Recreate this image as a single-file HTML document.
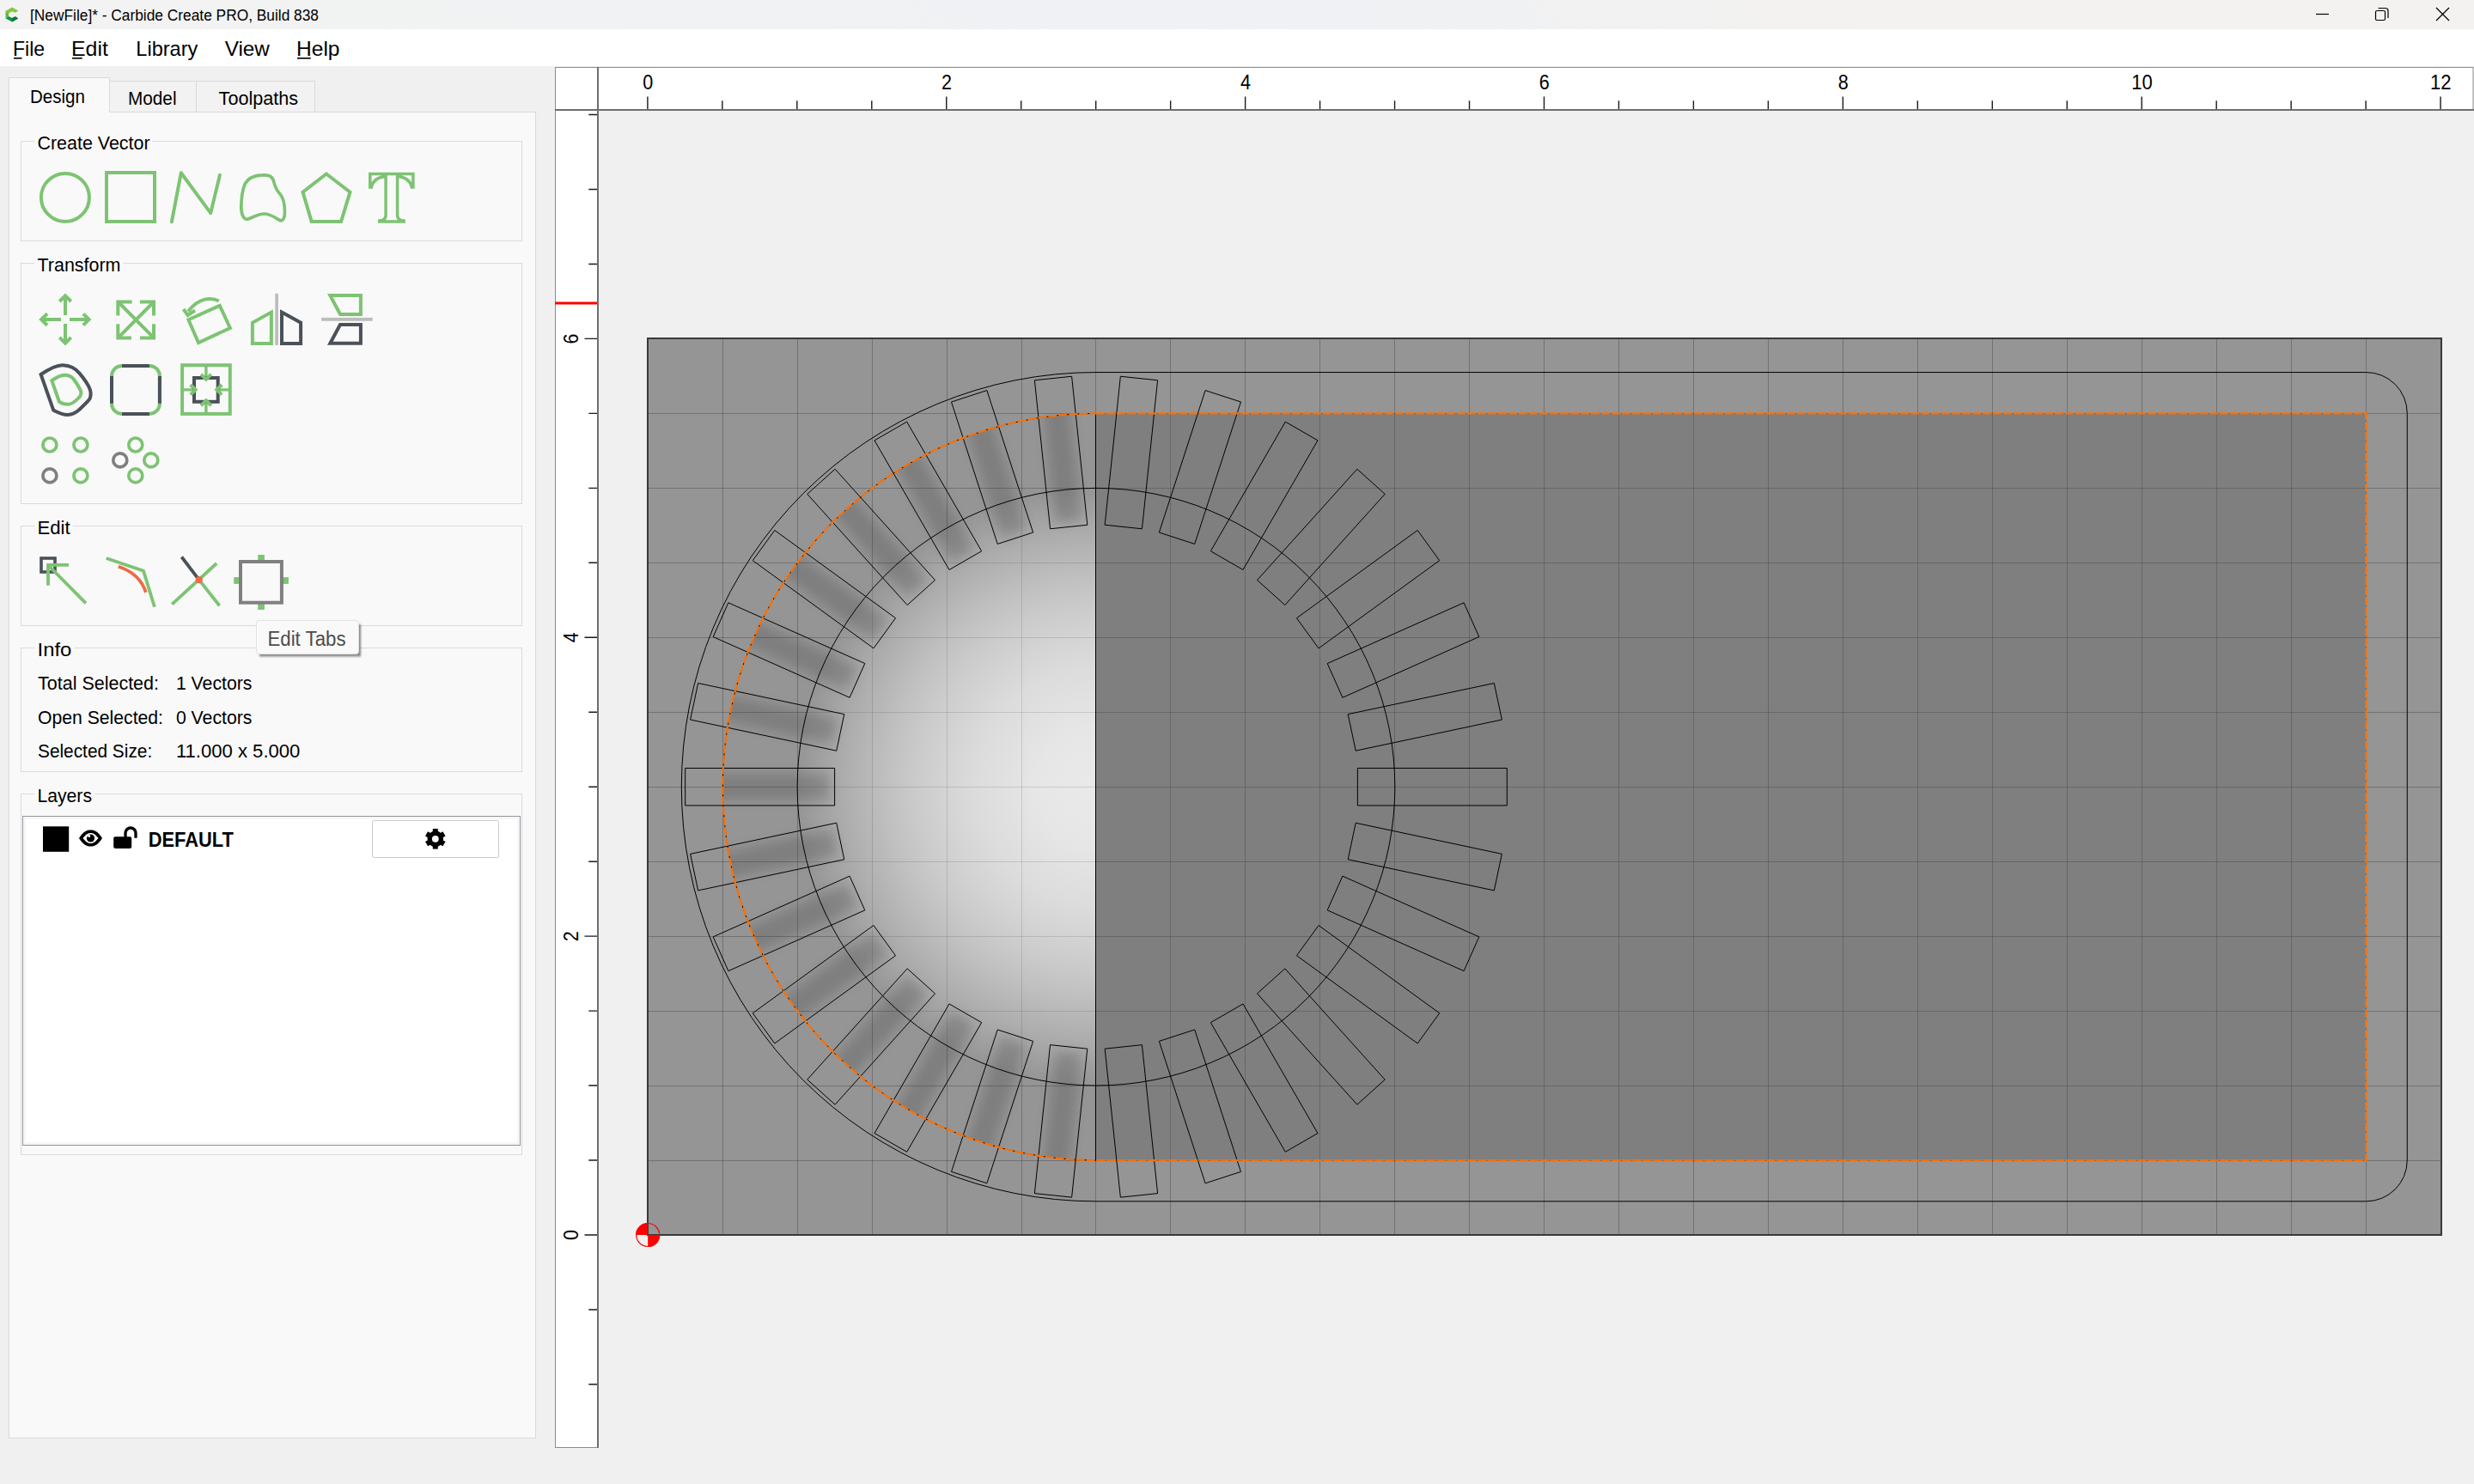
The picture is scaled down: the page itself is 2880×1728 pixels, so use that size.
<!DOCTYPE html><html><head><meta charset="utf-8"><style>html,body{margin:0;padding:0;overflow:hidden;background:#f0f0f0}svg{display:block}text{font-family:"Liberation Sans", sans-serif}</style></head><body><svg width="2880" height="1728" viewBox="0 0 2880 1728"><rect x="0" y="0" width="2880" height="1728" fill="#f0f0f0"/><defs><linearGradient id="tbg" x1="0" y1="0" x2="1" y2="0"><stop offset="0" stop-color="#f3f3f3"/><stop offset="0.25" stop-color="#f1f2f3"/><stop offset="0.5" stop-color="#eff1f5"/><stop offset="0.75" stop-color="#f3f2f0"/><stop offset="1" stop-color="#f3f2f1"/></linearGradient></defs><rect x="0" y="0" width="2880" height="34" fill="url(#tbg)"/><rect x="0" y="34" width="2880" height="43" fill="#ffffff"/><g><polygon points="14.1,8.5 21.2,12.4 17.9,14.7 14.1,13.3 10.1,15.6 6.5,12.8" fill="#86c440"/><polygon points="6.5,12.8 10.1,15.6 10.1,19 6.5,21.3" fill="#5fb748"/><polygon points="6.5,21.3 10.1,19 14.1,21.1 17.9,19.2 21.2,21.4 14.1,25.4" fill="#0d9440"/><polygon points="14.1,21.1 17.9,19.2 21.2,21.4 14.1,25.4" fill="#0a7a35"/></g><text x="35" y="24" font-size="17.5" fill="#000" textLength="336" lengthAdjust="spacingAndGlyphs" >[NewFile]* - Carbide Create PRO, Build 838</text><g stroke="#000" stroke-width="1.2" fill="none"><line x1="2696" y1="16.5" x2="2711" y2="16.5"/><rect x="2765.5" y="12.5" width="11" height="11" rx="1.5"/><path d="M2768.5,9.5 h8.5 a3,3 0 0 1 3,3 v8.5"/><line x1="2836" y1="9" x2="2851" y2="24"/><line x1="2851" y1="9" x2="2836" y2="24"/></g><text x="15" y="65.2" font-size="24" fill="#000" textLength="37.2" lengthAdjust="spacingAndGlyphs" >File</text><text x="83" y="65.2" font-size="24" fill="#000" textLength="42.8" lengthAdjust="spacingAndGlyphs" >Edit</text><text x="158.3" y="65.2" font-size="24" fill="#000" textLength="72" lengthAdjust="spacingAndGlyphs" >Library</text><text x="261.7" y="65.2" font-size="24" fill="#000" textLength="52.2" lengthAdjust="spacingAndGlyphs" >View</text><text x="345" y="65.2" font-size="24" fill="#000" textLength="50.5" lengthAdjust="spacingAndGlyphs" >Help</text><rect x="16" y="67" width="9.5" height="1.6" fill="#000"/><rect x="84" y="67" width="11.7" height="1.6" fill="#000"/><rect x="346" y="67" width="15.7" height="1.6" fill="#000"/><rect x="10.5" y="130.5" width="613" height="1544" fill="#f9f9f9" stroke="#dadada"/><rect x="127.5" y="94.5" width="101" height="36" fill="#f2f2f2" stroke="#dadada"/><rect x="228.5" y="94.5" width="138" height="36" fill="#f2f2f2" stroke="#dadada"/><path d="M10.5,131 V90.5 H127.5 V131" fill="#f9f9f9" stroke="#dadada"/><rect x="11" y="91" width="116" height="41" fill="#f9f9f9"/><text x="35" y="120" font-size="21.5" fill="#000" textLength="64" lengthAdjust="spacingAndGlyphs" >Design</text><text x="149" y="122" font-size="21.5" fill="#000" textLength="56.5" lengthAdjust="spacingAndGlyphs" >Model</text><text x="254.6" y="122" font-size="21.5" fill="#000" textLength="92.5" lengthAdjust="spacingAndGlyphs" >Toolpaths</text><rect x="24.5" y="164.5" width="583" height="116.0" fill="none" stroke="#dadada"/><rect x="40" y="162.5" width="137.6" height="4" fill="#f9f9f9"/><text x="43.5" y="173.5" font-size="22" fill="#000" textLength="131.1" lengthAdjust="spacingAndGlyphs" >Create Vector</text><rect x="24.5" y="306.5" width="583" height="280.0" fill="none" stroke="#dadada"/><rect x="40" y="304.5" width="103.5" height="4" fill="#f9f9f9"/><text x="43.5" y="316" font-size="22" fill="#000" textLength="97.0" lengthAdjust="spacingAndGlyphs" >Transform</text><rect x="24.5" y="612.5" width="583" height="116.0" fill="none" stroke="#dadada"/><rect x="40" y="610.5" width="44.7" height="4" fill="#f9f9f9"/><text x="43.5" y="622.3" font-size="22" fill="#000" textLength="38.2" lengthAdjust="spacingAndGlyphs" >Edit</text><rect x="24.5" y="754.5" width="583" height="144.0" fill="none" stroke="#dadada"/><rect x="40" y="752.5" width="46.3" height="4" fill="#f9f9f9"/><text x="43.5" y="763.8" font-size="22" fill="#000" textLength="39.8" lengthAdjust="spacingAndGlyphs" >Info</text><rect x="24.5" y="924.5" width="583" height="420.0" fill="none" stroke="#dadada"/><rect x="40" y="922.5" width="70" height="4" fill="#f9f9f9"/><text x="43.5" y="933.8" font-size="22" fill="#000" textLength="63.5" lengthAdjust="spacingAndGlyphs" >Layers</text><g fill="none" stroke="#7dc373" stroke-width="4"><circle cx="75.9" cy="229.9" r="28"/><rect x="124" y="201" width="56" height="57" stroke-linejoin="miter"/><polyline points="199.9,258.3 210.8,201.2 245.2,248.1 255.9,203.9" stroke-linecap="round" stroke-linejoin="round"/><path d="M306,203.9 C312,203.7 316,204.5 318.3,210 C320,216 320.5,220 325.5,225.2 C330,230 331.5,238 331.5,247 C331.5,253 330,257 326.4,256.8 C322,255 316,249 307.5,249 C300,249 293,254 288.5,255.2 C283,256 280.7,249 280.8,240 C281,230 282,222 285,214.5 C289,207 296,204 306,203.9 Z" stroke-width="3.7"/><polygon points="379.9,202.5 407.5,223.7 397.1,257.9 362.7,257.9 352.5,223.7" stroke-linejoin="miter"/><path d="M430.8,202.55 H480.9 V217.9 H479.3 Q477,206.7 462.6,205.3 V250.4 Q462.6,256.5 470.2,257.1 V257.9 H441.7 V257.1 Q449.1,256.5 449.1,250.4 V205.3 Q434.7,206.7 432.4,217.9 H430.8 Z" stroke-width="3.5"/></g><g fill="none" stroke="#7dc373" stroke-width="4"><path d="M76,346 V367 M76,377 V397.5 M50.5,372 H71 M81,372 H101.5"/><polyline points="69.3,351 76,344.3 82.7,351"/><polyline points="69.3,392.9 76,399.6 82.7,392.9"/><polyline points="55,365.3 48.1,372 55,378.7"/><polyline points="96.9,365.3 103.6,372 96.9,378.7"/><polyline points="153.6,351.4 137.3,351.4 137.3,367.5"/><polyline points="162.9,351.4 179,351.4 179,367.5"/><polyline points="137.3,377.3 137.3,393.4 153,393.4"/><polyline points="179,377.3 179,393.4 162.9,393.4"/><path d="M138.5,352.5 L178,392.3 M178,352.5 L138.5,392.3"/><polygon points="219.4,372.3 255.8,355.9 267.9,382 231,399"/><path d="M254.8,350.5 C246,346 232,346 219,362.5"/><polyline points="213.6,360 218.5,367 227,361.5"/><polygon points="293.9,375.7 315.9,363.6 315.9,400 293.9,400"/><polygon points="384.3,343.9 419.9,343.9 419.9,365.9 396,365.9"/></g><rect x="320.3" y="341.8" width="3.7" height="60.1" fill="#bdbdbd"/><rect x="374.1" y="369.9" width="59.7" height="3.9" fill="#bdbdbd"/><g fill="none" stroke="#4a5159" stroke-width="4"><polygon points="328,363.6 350.1,375.7 350.1,400 328,400"/><polygon points="396,378 419.9,378 419.9,399.8 384.3,399.8"/></g><path d="M47.6,436 C58,429 66,425 73,425.2 C82,425.5 88,429 92.3,434.4 C97,440 103,448 104.9,453.8 C106,458 106,461 104.4,464.5 C101,469 96,473 92.3,477.1 C88,481 84,483 78.7,482.9 C72,483 67,480 62.2,477.6 Z" fill="none" stroke="#4a5159" stroke-width="4"/><path d="M60.3,443.1 C65,440 70,437 74.8,436.8 C79,436.6 83,438.5 85.5,441.2 C89,446 92,450 94.2,455.7 C95,459 94,461 91.3,463.5 C88,467 84,470.5 79.7,470.8 C75,471 72,470 69,467.9 Z" fill="none" stroke="#7dc373" stroke-width="4"/><rect x="130" y="425.9" width="55.9" height="56" rx="12" fill="none" stroke="#7dc373" stroke-width="4"/><path d="M142,425.9 H173.8 M142,481.9 H173.8 M130,438 V469.8 M185.9,438 V469.8" stroke="#4a5159" stroke-width="4"/><rect x="212.1" y="425.2" width="55.7" height="56.7" fill="none" stroke="#7dc373" stroke-width="4"/><path d="M239.9,425 V482 M212,453.9 H268" stroke="#7dc373" stroke-width="3.4"/><rect x="226" y="440" width="27.7" height="27.8" fill="#f9f9f9" stroke="#4a5159" stroke-width="4"/><g fill="none" stroke="#7dc373" stroke-width="4"><polyline points="234,435.9 239.9,441.7 245.8,435.9"/><polyline points="234,472.2 239.9,466.4 245.8,472.2"/><polyline points="221.8,448 227.6,453.8 221.8,459.6"/><polyline points="258.1,448 252.3,453.8 258.1,459.6"/></g><g fill="none" stroke="#7dc373" stroke-width="3.7"><circle cx="57.9" cy="518" r="8"/><circle cx="93.9" cy="518" r="8"/><circle cx="93.9" cy="553.9" r="8"/><circle cx="157.8" cy="518" r="8"/><circle cx="175.8" cy="535.9" r="8"/><circle cx="157.8" cy="553.9" r="8"/></g><g fill="none" stroke="#808080" stroke-width="3.7"><circle cx="57.9" cy="553.9" r="8"/><circle cx="139.8" cy="535.9" r="8"/></g><rect x="48" y="650" width="16" height="16" fill="none" stroke="#4a5159" stroke-width="3.6"/><path d="M99.9,702.4 L57,659 M56,657.9 H80.1 M56,656 V681.7" fill="none" stroke="#7dc373" stroke-width="3.8"/><polyline points="123.7,650 167,664.8 179.9,706.8" fill="none" stroke="#7dc373" stroke-width="3.8"/><path d="M137.8,659.8 Q163,668 169.8,689.9" fill="none" stroke="#ef6a47" stroke-width="3.8"/><line x1="211.4" y1="648.5" x2="231.7" y2="675.1" stroke="#4a5159" stroke-width="3.8"/><path d="M252.2,656 L200.2,703.7 M231.7,675.1 L255.5,705.3" stroke="#7dc373" stroke-width="3.8"/><circle cx="231.7" cy="675.1" r="4.2" fill="#ef6a47"/><rect x="300.2" y="646" width="7.7" height="64" fill="#7dc373"/><rect x="272.2" y="672.1" width="63.7" height="7.8" fill="#7dc373"/><rect x="280" y="654" width="47.9" height="47.7" fill="#f9f9f9" stroke="#808080" stroke-width="4"/><text x="44" y="802.8" font-size="22" fill="#000" textLength="141" lengthAdjust="spacingAndGlyphs" >Total Selected:</text><text x="204.9" y="802.8" font-size="22" fill="#000" textLength="88.5" lengthAdjust="spacingAndGlyphs" >1 Vectors</text><text x="44" y="842.5" font-size="22" fill="#000" textLength="146" lengthAdjust="spacingAndGlyphs" >Open Selected:</text><text x="204.9" y="842.5" font-size="22" fill="#000" textLength="88.5" lengthAdjust="spacingAndGlyphs" >0 Vectors</text><text x="44" y="882.3" font-size="22" fill="#000" textLength="133.2" lengthAdjust="spacingAndGlyphs" >Selected Size:</text><text x="204.9" y="882.3" font-size="22" fill="#000" textLength="144.5" lengthAdjust="spacingAndGlyphs" >11.000 x 5.000</text><rect x="26.5" y="950.5" width="579" height="383" fill="#ffffff" stroke="#8e949a"/><rect x="28.5" y="952.5" width="575" height="379" fill="none" stroke="#f3f3f3" stroke-width="2"/><rect x="50" y="962.3" width="30.2" height="29.5" fill="#000"/><path d="M92,976 C97,968 101,966.5 105.5,966.5 C110,966.5 114,968 119,976 C114,984 110,985.5 105.5,985.5 C101,985.5 97,984 92,976 Z" fill="#000"/><path d="M96.5,976 C100,971.5 102.5,970 105.5,970 C108.5,970 111,971.5 114.5,976 C111,980.5 108.5,982 105.5,982 C102.5,982 100,980.5 96.5,976 Z" fill="#fff"/><circle cx="105.5" cy="976" r="4.6" fill="#000"/><path d="M101.2,974.2 A4.6,4.6 0 0 1 104.6,971.4 L105.2,975 Z" fill="#fff"/><rect x="132.2" y="974.3" width="21" height="13.6" rx="1.8" fill="#000"/><path d="M146,975 V970 A6,6 0 0 1 158,970 V975.8" fill="none" stroke="#000" stroke-width="3.3"/><text x="172.8" y="986" font-size="23" fill="#000" font-weight="700" textLength="99" lengthAdjust="spacingAndGlyphs" >DEFAULT</text><rect x="433.5" y="955.5" width="147" height="43" rx="2" fill="#ffffff" stroke="#c9c9c9"/><g fill="#000"><polygon points="509.80,970.80 509.80,965.00 503.80,965.00 503.80,970.80"/><polygon points="503.10,971.20 498.08,968.30 495.08,973.50 500.10,976.40"/><polygon points="500.10,977.20 495.08,980.10 498.08,985.30 503.10,982.40"/><polygon points="503.80,982.80 503.80,988.60 509.80,988.60 509.80,982.80"/><polygon points="510.50,982.40 515.52,985.30 518.52,980.10 513.50,977.20"/><polygon points="513.50,976.40 518.52,973.50 515.52,968.30 510.50,971.20"/><circle cx="506.8" cy="976.8" r="9.3"/></g><circle cx="506.8" cy="976.8" r="3.9" fill="#fff"/><filter id="tsh" x="-20%" y="-50%" width="140%" height="200%"><feGaussianBlur stdDeviation="1.2"/></filter><rect x="302" y="727" width="118" height="37.5" fill="#000" opacity="0.45" filter="url(#tsh)"/><rect x="298.5" y="722.5" width="119" height="39" rx="3" fill="#f9f9f9" stroke="#e2e2e2"/><text x="311.5" y="751.7" font-size="23" fill="#4c4c4c" textLength="91" lengthAdjust="spacingAndGlyphs" >Edit Tabs</text><rect x="646.5" y="78.5" width="2232.5" height="50" fill="#ffffff" stroke="#8c8c8c"/><rect x="646.5" y="78.5" width="50" height="1607" fill="#ffffff" stroke="#8c8c8c"/><rect x="646" y="127" width="2234" height="2" fill="#6e6e6e"/><rect x="695" y="78" width="2" height="1608" fill="#6e6e6e"/><path d="M753.9000000000001,112.5 V127 M840.8650000000001,117.3 V127 M927.8300000000002,117.3 V127 M1014.7950000000001,117.3 V127 M1101.76,112.5 V127 M1188.7250000000001,117.3 V127 M1275.69,117.3 V127 M1362.655,117.3 V127 M1449.6200000000001,112.5 V127 M1536.5850000000003,117.3 V127 M1623.5500000000002,117.3 V127 M1710.515,117.3 V127 M1797.48,112.5 V127 M1884.4450000000002,117.3 V127 M1971.41,117.3 V127 M2058.375,117.3 V127 M2145.34,112.5 V127 M2232.305,117.3 V127 M2319.27,117.3 V127 M2406.2349999999997,117.3 V127 M2493.2,112.5 V127 M2580.165,117.3 V127 M2667.13,117.3 V127 M2754.0950000000003,117.3 V127 M2841.0599999999995,112.5 V127 M685.3,1611.93 H695 M685.3,1524.965 H695 M680.5,1438.0 H695 M685.3,1351.035 H695 M685.3,1264.07 H695 M685.3,1177.105 H695 M680.5,1090.1399999999999 H695 M685.3,1003.175 H695 M685.3,916.21 H695 M685.3,829.245 H695 M680.5,742.28 H695 M685.3,655.3149999999999 H695 M685.3,568.3499999999999 H695 M685.3,481.385 H695 M680.5,394.4200000000001 H695 M685.3,307.4549999999999 H695 M685.3,220.49 H695 M685.3,133.52499999999986 H695" stroke="#1a1a1a" stroke-width="1.4"/><text x="754.2" y="104" font-size="23.5" fill="#000" textLength="12" lengthAdjust="spacingAndGlyphs" text-anchor="middle" >0</text><text x="1102.06" y="104" font-size="23.5" fill="#000" textLength="12" lengthAdjust="spacingAndGlyphs" text-anchor="middle" >2</text><text x="1449.92" y="104" font-size="23.5" fill="#000" textLength="12" lengthAdjust="spacingAndGlyphs" text-anchor="middle" >4</text><text x="1797.78" y="104" font-size="23.5" fill="#000" textLength="12" lengthAdjust="spacingAndGlyphs" text-anchor="middle" >6</text><text x="2145.6400000000003" y="104" font-size="23.5" fill="#000" textLength="12" lengthAdjust="spacingAndGlyphs" text-anchor="middle" >8</text><text x="2493.5" y="104" font-size="23.5" fill="#000" textLength="24.5" lengthAdjust="spacingAndGlyphs" text-anchor="middle" >10</text><text x="2841.3599999999997" y="104" font-size="23.5" fill="#000" textLength="24.5" lengthAdjust="spacingAndGlyphs" text-anchor="middle" >12</text><text x="0" y="0" font-size="23.5" text-anchor="middle" textLength="12" lengthAdjust="spacingAndGlyphs" transform="translate(672.5,1438.0) rotate(-90)">0</text><text x="0" y="0" font-size="23.5" text-anchor="middle" textLength="12" lengthAdjust="spacingAndGlyphs" transform="translate(672.5,1090.1399999999999) rotate(-90)">2</text><text x="0" y="0" font-size="23.5" text-anchor="middle" textLength="12" lengthAdjust="spacingAndGlyphs" transform="translate(672.5,742.28) rotate(-90)">4</text><text x="0" y="0" font-size="23.5" text-anchor="middle" textLength="12" lengthAdjust="spacingAndGlyphs" transform="translate(672.5,394.4200000000001) rotate(-90)">6</text><rect x="646" y="351.5" width="49" height="3" fill="#ff0000"/><defs><radialGradient id="dome" gradientUnits="userSpaceOnUse" cx="1275.99" cy="916.21" r="347.86"><stop offset="0" stop-color="rgb(233,233,233)"/><stop offset="0.1" stop-color="rgb(232,232,232)"/><stop offset="0.2" stop-color="rgb(230,230,230)"/><stop offset="0.3" stop-color="rgb(225,225,225)"/><stop offset="0.4" stop-color="rgb(220,220,220)"/><stop offset="0.5" stop-color="rgb(212,212,212)"/><stop offset="0.6" stop-color="rgb(203,203,203)"/><stop offset="0.7" stop-color="rgb(192,192,192)"/><stop offset="0.8" stop-color="rgb(179,179,179)"/><stop offset="0.9" stop-color="rgb(165,165,165)"/><stop offset="0.95" stop-color="rgb(157,157,157)"/><stop offset="1.0" stop-color="rgb(149,149,149)"/></radialGradient><clipPath id="leftD"><path d="M1275.99,481.385 A434.82500000000005,434.82500000000005 0 0 0 1275.99,1351.035 Z"/></clipPath><filter id="blur" x="-50%" y="-50%" width="200%" height="200%"><feGaussianBlur stdDeviation="6.5"/></filter></defs><rect x="754" y="394" width="2088" height="1044" fill="#959595"/><path d="M841.5,394 V1438 M928.5,394 V1438 M1015.5,394 V1438 M1102.5,394 V1438 M1189.5,394 V1438 M1275.5,394 V1438 M1362.5,394 V1438 M1449.5,394 V1438 M1536.5,394 V1438 M1623.5,394 V1438 M1710.5,394 V1438 M1797.5,394 V1438 M1884.5,394 V1438 M1971.5,394 V1438 M2058.5,394 V1438 M2145.5,394 V1438 M2232.5,394 V1438 M2319.5,394 V1438 M2406.5,394 V1438 M2493.5,394 V1438 M2580.5,394 V1438 M2667.5,394 V1438 M2754.5,394 V1438 M754,481.5 H2842 M754,568.5 H2842 M754,655.5 H2842 M754,742.5 H2842 M754,829.5 H2842 M754,916.5 H2842 M754,1003.5 H2842 M754,1090.5 H2842 M754,1177.5 H2842 M754,1264.5 H2842 M754,1351.5 H2842" stroke="#000" stroke-opacity="0.12" stroke-width="1"/><rect x="1275.99" y="481.385" width="1478.405" height="869.6500000000001" fill="#7f7f7f"/><path d="M1275.99,568.35 A347.86,347.86 0 0 0 1275.99,1264.0700000000002 Z" fill="url(#dome)"/><g clip-path="url(#leftD)"><g filter="url(#blur)" fill="#404040" opacity="0.25"><polygon points="1258.46,605.96 1241.82,447.60 1211.98,450.74 1228.63,609.10"/><polygon points="1194.34,616.39 1145.14,464.95 1116.61,474.22 1165.81,625.66"/><polygon points="1133.79,639.92 1054.17,502.01 1028.19,517.01 1107.81,654.92"/><polygon points="1079.45,675.52 972.91,557.18 950.61,577.26 1057.16,695.59"/><polygon points="1033.71,721.64 904.88,628.04 887.25,652.31 1016.07,745.91"/><polygon points="998.55,776.26 853.08,711.50 840.88,738.91 986.34,803.67"/><polygon points="975.51,837.01 819.76,803.90 813.52,833.24 969.28,866.35"/><polygon points="965.61,901.21 806.38,901.21 806.38,931.21 965.61,931.21"/><polygon points="969.28,966.07 813.52,999.18 819.76,1028.52 975.51,995.41"/><polygon points="986.34,1028.75 840.88,1093.51 853.08,1120.92 998.55,1056.16"/><polygon points="1016.07,1086.51 887.25,1180.11 904.88,1204.38 1033.71,1110.78"/><polygon points="1057.16,1136.83 950.61,1255.16 972.91,1275.24 1079.45,1156.90"/><polygon points="1107.81,1177.50 1028.19,1315.41 1054.17,1330.41 1133.79,1192.50"/><polygon points="1165.81,1206.76 1116.61,1358.20 1145.14,1367.47 1194.34,1216.03"/><polygon points="1228.63,1223.32 1211.98,1381.68 1241.82,1384.82 1258.46,1226.46"/></g></g><path d="M841.5,394 V1438 M928.5,394 V1438 M1015.5,394 V1438 M1102.5,394 V1438 M1189.5,394 V1438 M1275.5,394 V1438 M1362.5,394 V1438 M1449.5,394 V1438 M1536.5,394 V1438 M1623.5,394 V1438 M1710.5,394 V1438 M1797.5,394 V1438 M1884.5,394 V1438 M1971.5,394 V1438 M2058.5,394 V1438 M2145.5,394 V1438 M2232.5,394 V1438 M2319.5,394 V1438 M2406.5,394 V1438 M2493.5,394 V1438 M2580.5,394 V1438 M2667.5,394 V1438 M2754.5,394 V1438 M754,481.5 H2842 M754,568.5 H2842 M754,655.5 H2842 M754,742.5 H2842 M754,829.5 H2842 M754,916.5 H2842 M754,1003.5 H2842 M754,1090.5 H2842 M754,1177.5 H2842 M754,1264.5 H2842 M754,1351.5 H2842" stroke="#000" stroke-opacity="0.12" stroke-width="1"/><clipPath id="darkc"><rect x="1275.99" y="481.385" width="1478.405" height="869.6500000000001"/></clipPath><path d="M841.5,394 V1438 M928.5,394 V1438 M1015.5,394 V1438 M1102.5,394 V1438 M1189.5,394 V1438 M1275.5,394 V1438 M1362.5,394 V1438 M1449.5,394 V1438 M1536.5,394 V1438 M1623.5,394 V1438 M1710.5,394 V1438 M1797.5,394 V1438 M1884.5,394 V1438 M1971.5,394 V1438 M2058.5,394 V1438 M2145.5,394 V1438 M2232.5,394 V1438 M2319.5,394 V1438 M2406.5,394 V1438 M2493.5,394 V1438 M2580.5,394 V1438 M2667.5,394 V1438 M2754.5,394 V1438 M754,481.5 H2842 M754,568.5 H2842 M754,655.5 H2842 M754,742.5 H2842 M754,829.5 H2842 M754,916.5 H2842 M754,1003.5 H2842 M754,1090.5 H2842 M754,1177.5 H2842 M754,1264.5 H2842 M754,1351.5 H2842" stroke="#000" stroke-opacity="0.07" stroke-width="1" clip-path="url(#darkc)"/><rect x="754" y="394" width="2088" height="1044" fill="none" stroke="#3a3a3a" stroke-width="2"/><path d="M1275.99,433.53499999999997 H2754.3950000000004 A47.85,47.85 0 0 1 2802.2450000000003,481.385 V1351.035 A47.85,47.85 0 0 1 2754.3950000000004,1398.8850000000002 H1275.99 A482.67500000000007,482.67500000000007 0 0 1 1275.99,433.53499999999997 Z M928.13,916.21 A347.86,347.86 0 1 1 1623.85,916.21 A347.86,347.86 0 1 1 928.13,916.21 Z M1580.37,937.95 L1754.30,937.95 L1754.30,894.47 L1580.37,894.47 Z M1578.24,874.19 L1748.37,838.03 L1739.33,795.50 L1569.20,831.66 Z M1562.90,812.27 L1721.79,741.53 L1704.10,701.80 L1545.21,772.55 Z M1535.02,754.89 L1675.73,652.66 L1650.17,617.48 L1509.46,719.71 Z M1495.82,704.56 L1612.20,575.31 L1579.88,546.21 L1463.50,675.47 Z M1447.01,663.48 L1533.97,512.85 L1496.32,491.11 L1409.35,641.74 Z M1390.72,633.45 L1444.47,468.03 L1403.12,454.59 L1349.37,620.01 Z M1329.43,615.77 L1347.61,442.80 L1304.36,438.25 L1286.18,611.23 Z M1265.80,611.23 L1247.62,438.25 L1204.37,442.80 L1222.55,615.77 Z M1202.61,620.01 L1148.86,454.59 L1107.51,468.03 L1161.26,633.45 Z M1142.63,641.74 L1055.66,491.11 L1018.01,512.85 L1104.97,663.48 Z M1088.48,675.47 L972.10,546.21 L939.78,575.31 L1056.16,704.56 Z M1042.52,719.71 L901.81,617.48 L876.25,652.66 L1016.96,754.89 Z M1006.77,772.55 L847.88,701.80 L830.19,741.53 L989.08,812.27 Z M982.78,831.66 L812.65,795.50 L803.61,838.03 L973.74,874.19 Z M971.61,894.47 L797.68,894.47 L797.68,937.95 L971.61,937.95 Z M973.74,958.23 L803.61,994.39 L812.65,1036.92 L982.78,1000.76 Z M989.08,1020.15 L830.19,1090.89 L847.88,1130.62 L1006.77,1059.87 Z M1016.96,1077.53 L876.25,1179.76 L901.81,1214.94 L1042.52,1112.71 Z M1056.16,1127.86 L939.78,1257.11 L972.10,1286.21 L1088.48,1156.95 Z M1104.97,1168.94 L1018.01,1319.57 L1055.66,1341.31 L1142.63,1190.68 Z M1161.26,1198.97 L1107.51,1364.39 L1148.86,1377.83 L1202.61,1212.41 Z M1222.55,1216.65 L1204.37,1389.62 L1247.62,1394.17 L1265.80,1221.19 Z M1286.18,1221.19 L1304.36,1394.17 L1347.61,1389.62 L1329.43,1216.65 Z M1349.37,1212.41 L1403.12,1377.83 L1444.47,1364.39 L1390.72,1198.97 Z M1409.35,1190.68 L1496.32,1341.31 L1533.97,1319.57 L1447.01,1168.94 Z M1463.50,1156.95 L1579.88,1286.21 L1612.20,1257.11 L1495.82,1127.86 Z M1509.46,1112.71 L1650.17,1214.94 L1675.73,1179.76 L1535.02,1077.53 Z M1545.21,1059.87 L1704.10,1130.62 L1721.79,1090.89 L1562.90,1020.15 Z M1569.20,1000.76 L1739.33,1036.92 L1748.37,994.39 L1578.24,958.23 Z M1275.5,481.385 V1351.035 M1275.99,481.385 A434.82500000000005,434.82500000000005 0 0 0 1275.99,1351.035" fill="none" stroke="#000" stroke-width="1"/><path d="M1275.99,481.385 H2754.3950000000004 V1351.035 H1275.99 A434.82500000000005,434.82500000000005 0 0 1 1275.99,481.385 Z" fill="none" stroke="#ff6f00" stroke-width="2.2" stroke-dasharray="10 2"/><path d="M754.2,1438.0 H740.2 A14,14 0 0 1 754.2,1424.0 Z M754.2,1438.0 H768.2 A14,14 0 0 1 754.2,1452.0 Z" fill="#ff0000"/><circle cx="754.2" cy="1438.0" r="13.5" fill="none" stroke="#ff0000" stroke-width="1.2"/></svg></body></html>
